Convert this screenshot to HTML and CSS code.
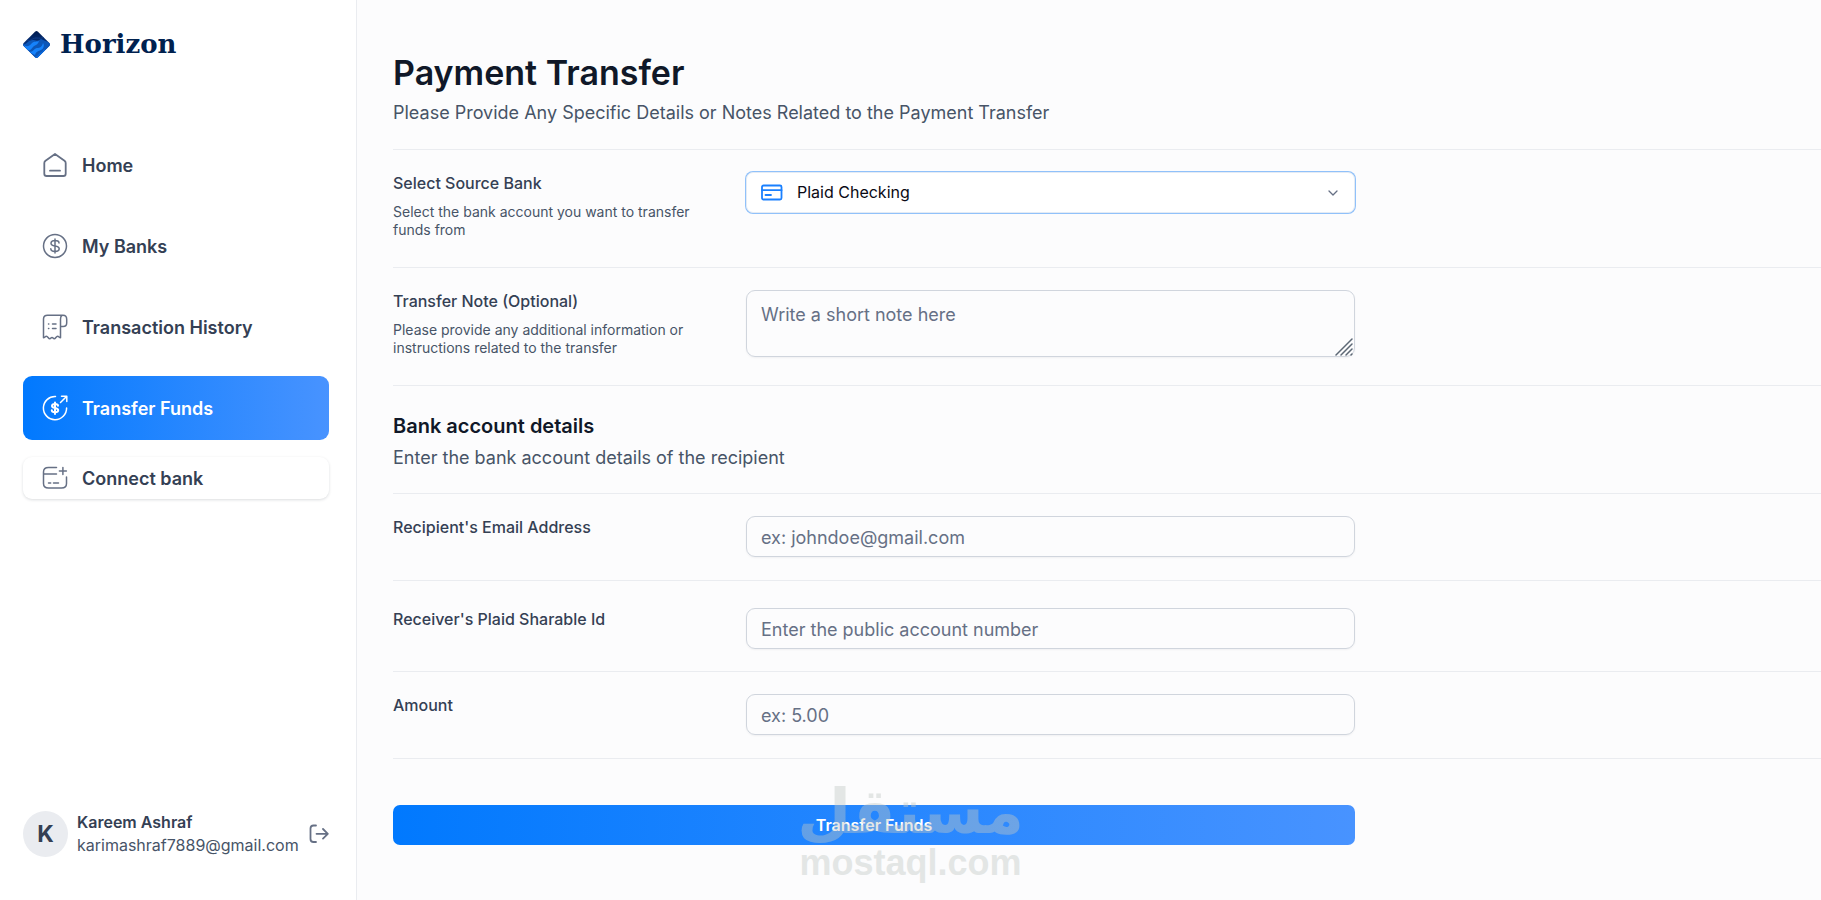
FILE: index.html
```html
<!DOCTYPE html>
<html lang="en">
<head>
  <meta charset="utf-8">
  <meta name="viewport" content="width=device-width, initial-scale=1.0">
  <title>Horizon</title>
  <link rel="stylesheet" href="styles.css">
</head>
<body>
  <div class="layout">
    <aside class="sidebar">
      <a href="#" class="brand">
        <svg class="brand-logo" viewBox="0 0 27 27">
          <defs>
            <clipPath id="diamond"><path d="M12 .7q1.500-1.300 3 0l11.300 11.300q1.300 1.500 0 3L15 26.300q-1.500 1.300-3 0L.7 15q-1.300-1.500 0-3z"/></clipPath>
            <linearGradient id="night" x1="0" y1="0" x2="0" y2="1">
              <stop offset="0" stop-color="#001a4d"/>
              <stop offset="1" stop-color="#0d4fb5"/>
            </linearGradient>
          </defs>
          <g clip-path="url(#diamond)">
            <rect width="27" height="27" fill="url(#night)"/>
            <path d="M0 13c4 1 5-4 9-4s5 2 9-1l9 4v15H0z" fill="#0c56b8"/>
            <path d="M0 13c3 4 7 2 9-1 2-2 5-1 7-2-1 4-4 4-6 6s-2 4-6 3z" fill="#1682fb"/>
            <path d="M6 21c5 0 5-4 8-4s5-1 6-5c2 3 0 6-2 7s-5 1-6 5z" fill="#1682fb"/>
            <path d="M12 26c4-1 3-4 7-5l2-3 2 2-8 7z" fill="#0a6be0"/>
            <path d="M4 9c4 2 5-2 9-2s5 1 8-1" fill="none" stroke="#123f8c"/>
          </g>
        </svg>
        <span>Horizon</span>
      </a>

      <nav class="nav">
        <a href="#" class="nav-link">
          <svg class="icon" viewBox="0 0 26 26">
            <path stroke-width="1.800" d="M13 2 3.500 8.700Q2.300 9.600 2.300 11v10.700Q2.300 24 4.600 24h16.800q2.300 0 2.300-2.300V11q0-1.400-1.200-2.300zM8 18.700h10"/>
          </svg>
          <span>Home</span>
        </a>
        <a href="#" class="nav-link">
          <svg class="icon" viewBox="0 0 26 26">
            <circle cx="13" cy="13" r="11.500"/>
            <path d="M13 6v14M17 10c0-1.700-1.600-2.500-4-2.500S9 8.500 9 10.300s1.600 2.300 4 2.700 4.200.9 4.200 2.800-1.800 2.700-4.200 2.700-4.200-.8-4.200-2.700"/>
          </svg>
          <span>My Banks</span>
        </a>
        <a href="#" class="nav-link">
          <svg class="icon" viewBox="0 0 26 26">
            <path d="M18.500 12.500v11.300c-1.200 0-1.700-1.600-3-1.600s-1.900 2.600-3.300 2.600c-1.100 0-1.200-1.400-2.200-1.400s-1.100 1.400-2.200 1.400c-1.400 0-2-2.600-3.300-2.600s-1.800 1.600-3 1.600V5c0-2.500 1.500-3.800 4-3.800h15.500c2.300 0 3.700 1.800 3.700 4V9c0 2.300-1.200 3.500-3.500 3.500h-2.700V5c0-2 .6-3.300 1.800-3.800M10.500 10H14M10.500 14.500H14M6.500 10h.3M6.500 14.500h.3"/>
          </svg>
          <span>Transaction History</span>
        </a>
        <a href="#" class="nav-link active">
          <svg class="icon" viewBox="0 0 26 26">
            <path d="M13.500 1.500A11.600 11.600 0 1 0 24.600 13M18.500 7.500l6-6M19.500 1.200h5.300v5.300"/>
            <path stroke-width="2" d="M13 7.500v11.500M16 10.800c0-1.200-1.200-1.700-3-1.700s-3 .6-3 2 1.200 1.700 3 2 3.200.7 3.200 2.200-1.400 2-3.200 2-3.200-.7-3.200-2"/>
          </svg>
          <span>Transfer Funds</span>
        </a>
        <button type="button" class="connect">
          <svg class="icon" viewBox="0 0 26 26">
            <path d="M14.500 2.500H6.500Q1.500 2.500 1.500 7v11.500q0 4.500 5 4.500h13q5 0 5-4.500v-6.500M1.500 9h13M6.500 18h2.200M11.500 18h5M20.900 2.500v7M17.400 6h7"/>
          </svg>
          <span>Connect bank</span>
        </button>
      </nav>

      <footer class="user">
        <div class="avatar">K</div>
        <div class="user-info">
          <h2>Kareem Ashraf</h2>
          <p>karimashraf7889@gmail.com</p>
        </div>
        <button type="button" class="logout" aria-label="Log out">
          <svg viewBox="0 0 20 20">
            <path d="M7 1.500H4.500Q1.500 1.500 1.500 4.500v10.500q0 3 3 3H7M7.500 9.800h11M14 5l4.800 4.800L14 14.600"/>
          </svg>
        </button>
      </footer>
    </aside>

    <main class="content">
      <header class="page-header">
        <h1>Payment Transfer</h1>
        <p>Please Provide Any Specific Details or Notes Related to the Payment Transfer</p>
      </header>

      <form class="transfer-form">
        <div class="row">
          <div class="row-label">
            <label for="bank">Select Source Bank</label>
            <p>Select the bank account you want to transfer funds from</p>
          </div>
          <div class="field">
            <svg class="card-icon" viewBox="0 0 22 18">
              <rect x="1" y="1.500" width="19.500" height="14" rx="1.500"/>
              <path d="M1 6.200h19.500M4.500 11h5.500"/>
            </svg>
            <select id="bank" class="bank-select">
              <option>Plaid Checking</option>
            </select>
            <svg class="chevron" viewBox="0 0 10 6"><path d="m1 1 4 4 4-4"/></svg>
          </div>
        </div>

        <div class="row">
          <div class="row-label">
            <label for="note">Transfer Note (Optional)</label>
            <p>Please provide any additional information or instructions related to the transfer</p>
          </div>
          <div class="field">
            <textarea id="note" class="input note" placeholder="Write a short note here"></textarea>
            <svg class="grip" viewBox="0 0 18 18"><path d="M1 17 17 1M6 17 17 6M11 17l6-6M16 17l1-1"/></svg>
          </div>
        </div>

        <div class="section">
          <h2>Bank account details</h2>
          <p>Enter the bank account details of the recipient</p>
        </div>

        <div class="row compact">
          <div class="row-label"><label for="email">Recipient's Email Address</label></div>
          <div class="field"><input type="text" id="email" class="input" placeholder="ex: johndoe@gmail.com"></div>
        </div>

        <div class="row compact sharable">
          <div class="row-label"><label for="sharableId">Receiver's Plaid Sharable Id</label></div>
          <div class="field"><input type="text" id="sharableId" class="input" placeholder="Enter the public account number"></div>
        </div>

        <div class="row compact">
          <div class="row-label"><label for="amount">Amount</label></div>
          <div class="field"><input type="text" id="amount" class="input" placeholder="ex: 5.00"></div>
        </div>

        <button type="button" class="submit">Transfer Funds</button>
      </form>
    </main>
  </div>

  <div class="watermark">
    <span class="watermark-ar" lang="ar" dir="rtl">مستقل</span>
    <span class="watermark-en">mostaql.com</span>
  </div>
</body>
</html>
```
FILE: styles.css
```css
* {
  box-sizing: border-box;
}
body {
  margin: 0;
  font-family: Inter, "Liberation Sans", sans-serif;
  font-size: 16px;
  color: #344054;
  background-color: #fcfcfd;
}
h1, h2, p {
  margin: 0;
}
a {
  color: inherit;
  text-decoration: none;
}
button, input, select, textarea {
  font-family: inherit;
}
svg {
  fill: none;
  stroke-linecap: round;
  stroke-linejoin: round;
}
.layout {
  display: flex;
  min-height: 100vh;
}

/* sidebar */
.sidebar {
  display: flex;
  flex-direction: column;
  flex: 0 0 357px;
  padding: 27px 27px 43px 23px;
  background-color: #fff;
  border-right: 1px solid #eaecf0;
}
.brand {
  display: flex;
  align-items: center;
  gap: 10px;
  height: 34px;
  margin-bottom: 72px;
  font-family: "DejaVu Serif", serif;
  font-size: 26px;
  font-weight: bold;
  color: #00214f;
}
.brand-logo {
  width: 27px;
  height: 27px;
}
.nav {
  display: flex;
  flex-direction: column;
  gap: 17px;
}
.nav-link, .connect {
  display: flex;
  align-items: center;
  gap: 14px;
  height: 64px;
  padding: 0 19px;
  border-radius: 9px;
  font-size: 18px;
  font-weight: 600;
}
.icon {
  width: 26px;
  height: 26px;
  stroke: #667085;
  stroke-width: 1.5;
}
.active {
  color: #fff;
  background: linear-gradient(90deg, #0179fe, #4893ff);
}
.active .icon {
  stroke: #fff;
}
.connect {
  height: 42px;
  border: none;
  color: #344054;
  background-color: #fff;
  box-shadow: 0 1px 3px rgba(16, 24, 40, 0.15);
  cursor: pointer;
}
.user {
  display: flex;
  align-items: center;
  gap: 9px;
  margin-top: auto;
}
.avatar {
  display: flex;
  align-items: center;
  justify-content: center;
  flex: none;
  width: 45px;
  height: 46px;
  border-radius: 50%;
  background-color: #eaecf0;
  font-size: 23px;
  font-weight: 700;
}
.user-info {
  flex: 1;
  line-height: 23px;
}
.user-info h2 {
  font-size: 16px;
  font-weight: 600;
}
.user-info p {
  color: #475467;
}
.logout {
  padding: 0;
  border: none;
  background: none;
  cursor: pointer;
}
.logout svg {
  display: block;
  width: 20px;
  height: 20px;
  stroke: #667085;
  stroke-width: 1.8;
}

/* page */
.content {
  flex: 1;
  min-width: 0;
  padding: 51px 0 40px 36px;
}
.page-header {
  padding-bottom: 23px;
  border-bottom: 1px solid #eaecf0;
}
.page-header h1 {
  margin-bottom: 5px;
  font-size: 34px;
  font-weight: 600;
  line-height: 43px;
  color: #101828;
}
.page-header p, .section p {
  font-size: 18px;
  line-height: 27px;
  color: #475467;
}
.row {
  display: flex;
  align-items: flex-start;
  gap: 38px;
  padding: 22px 0 28px;
  border-bottom: 1px solid #eaecf0;
}
.row-label {
  flex: 0 0 315px;
}
.row-label label {
  display: block;
  font-weight: 500;
  line-height: 23px;
}
.row-label p {
  margin-top: 8px;
  font-size: 14px;
  line-height: 18px;
  color: #475467;
}
.compact {
  padding-bottom: 23px;
}
.sharable {
  padding: 27px 0 22px;
}
.field {
  position: relative;
  flex: 0 1 609px;
}
.input {
  display: block;
  width: 100%;
  height: 41px;
  padding: 2px 14px 0;
  border: 1px solid #d0d5dd;
  border-radius: 9px;
  background-color: transparent;
  font-size: 18px;
  color: #101828;
  box-shadow: 0 1px 2px rgba(16, 24, 40, 0.05);
}
.input::placeholder {
  color: #667085;
}
.note {
  height: 67px;
  padding: 10px 14px;
  line-height: 27px;
  resize: none;
}
.grip {
  position: absolute;
  right: 2px;
  bottom: 1px;
  width: 18px;
  height: 18px;
  stroke: #5d6875;
  stroke-width: 1.5;
}
.bank-select {
  display: block;
  width: 100%;
  height: 41px;
  padding: 0 50px 2px;
  border: 1px solid #e4ebf4;
  border-radius: 7px;
  background-color: #fff;
  font-size: 16px;
  color: #0a0a14;
  box-shadow: 0 0 0 1px #90c1fa;
  appearance: none;
}
.card-icon {
  position: absolute;
  left: 15px;
  top: 12px;
  width: 22px;
  height: 18px;
  stroke: #1a80ff;
  stroke-width: 1.8;
}
.chevron {
  position: absolute;
  right: 17px;
  top: 18px;
  width: 10px;
  height: 6px;
  stroke: #667085;
  stroke-width: 1.3;
}
.section {
  padding: 27px 0 22px;
  border-bottom: 1px solid #eaecf0;
}
.section h2 {
  margin-bottom: 4px;
  font-size: 20px;
  font-weight: 600;
  line-height: 27px;
  color: #101828;
}
.submit {
  display: block;
  width: 100%;
  max-width: 962px;
  height: 40px;
  margin-top: 46px;
  border: none;
  border-radius: 7px;
  background: linear-gradient(90deg, #0179fe, #4893ff);
  font-size: 16px;
  font-weight: 600;
  color: #fff;
  cursor: pointer;
}

/* watermark over the bottom of the page */
.watermark {
  position: absolute;
  left: 0;
  right: 0;
  bottom: 17px;
  display: flex;
  flex-direction: column;
  align-items: center;
  color: rgb(194, 200, 197);
  font-weight: bold;
  opacity: 0.42;
  pointer-events: none;
}
.watermark-ar {
  font-family: "DejaVu Sans", sans-serif;
  font-size: 62px;
  line-height: 62px;
}
.watermark-en {
  font-family: "Liberation Sans", sans-serif;
  font-size: 36px;
  line-height: 40px;
}
```
